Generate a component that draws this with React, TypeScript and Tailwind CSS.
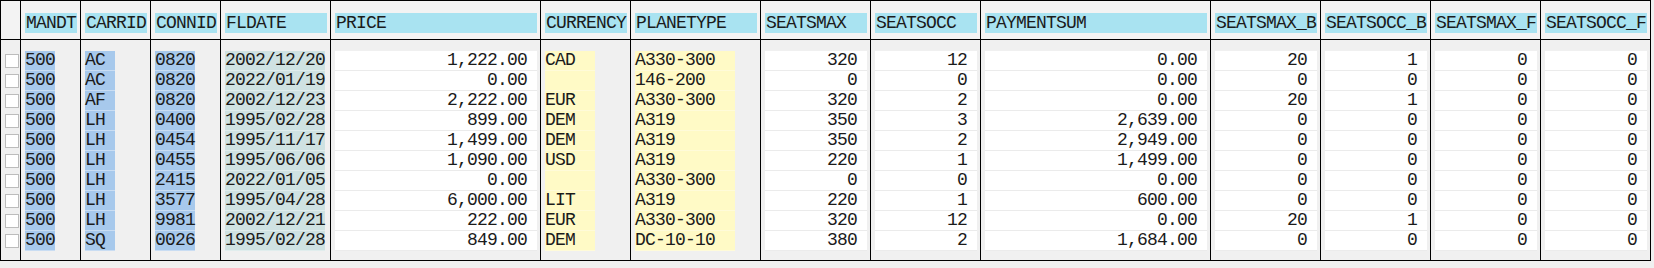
type Kind = "key" | "date" | "cur" | "num";

interface Col {
  name: string;
  width: string;
  kind: Kind;
  box?: string;
}

const columns: Col[] = [
  { name: "MANDT", width: "w-[60px]", kind: "key", box: "w-[30px]" },
  { name: "CARRID", width: "w-[70px]", kind: "key", box: "w-[30px]" },
  { name: "CONNID", width: "w-[70px]", kind: "key", box: "w-[40px]" },
  { name: "FLDATE", width: "w-[110px]", kind: "date", box: "w-[100px]" },
  { name: "PRICE", width: "w-[210px]", kind: "num" },
  { name: "CURRENCY", width: "w-[90px]", kind: "cur", box: "w-[50px]" },
  { name: "PLANETYPE", width: "w-[130px]", kind: "cur", box: "w-[100px]" },
  { name: "SEATSMAX", width: "w-[110px]", kind: "num" },
  { name: "SEATSOCC", width: "w-[110px]", kind: "num" },
  { name: "PAYMENTSUM", width: "w-[230px]", kind: "num" },
  { name: "SEATSMAX_B", width: "w-[110px]", kind: "num" },
  { name: "SEATSOCC_B", width: "w-[110px]", kind: "num" },
  { name: "SEATSMAX_F", width: "w-[110px]", kind: "num" },
  { name: "SEATSOCC_F", width: "w-[110px]", kind: "num" },
];

const rows: string[][] = [
  ["500", "AC", "0820", "2002/12/20", "1,222.00", "CAD", "A330-300", "320", "12", "0.00", "20", "1", "0", "0"],
  ["500", "AC", "0820", "2022/01/19", "0.00", "", "146-200", "0", "0", "0.00", "0", "0", "0", "0"],
  ["500", "AF", "0820", "2002/12/23", "2,222.00", "EUR", "A330-300", "320", "2", "0.00", "20", "1", "0", "0"],
  ["500", "LH", "0400", "1995/02/28", "899.00", "DEM", "A319", "350", "3", "2,639.00", "0", "0", "0", "0"],
  ["500", "LH", "0454", "1995/11/17", "1,499.00", "DEM", "A319", "350", "2", "2,949.00", "0", "0", "0", "0"],
  ["500", "LH", "0455", "1995/06/06", "1,090.00", "USD", "A319", "220", "1", "1,499.00", "0", "0", "0", "0"],
  ["500", "LH", "2415", "2022/01/05", "0.00", "", "A330-300", "0", "0", "0.00", "0", "0", "0", "0"],
  ["500", "LH", "3577", "1995/04/28", "6,000.00", "LIT", "A319", "220", "1", "600.00", "0", "0", "0", "0"],
  ["500", "LH", "9981", "2002/12/21", "222.00", "EUR", "A330-300", "320", "12", "0.00", "20", "1", "0", "0"],
  ["500", "SQ", "0026", "1995/02/28", "849.00", "DEM", "DC-10-10", "380", "2", "1,684.00", "0", "0", "0", "0"],
];

const cellBg: Record<Kind, string> = {
  key: "bg-[#a7c9ec] border-b border-[#c9ddf3]",
  date: "bg-[#cfe2e2] border-b border-[#e0eded]",
  cur: "bg-[#fffac6] border-b border-[#fffbd9]",
  num: "bg-white border-b border-[#ebebeb]",
};

function Cell({ col, value }: { col: Col; value: string }) {
  if (col.kind === "num") {
    return (
      <div className={`h-[20px] leading-[19px] text-right pr-[10px] whitespace-nowrap ${cellBg.num}`}>
        {value}
      </div>
    );
  }

  return (
    <div className={`h-[20px] leading-[19px] whitespace-nowrap ${col.box} ${cellBg[col.kind]}`}>
      {value}
    </div>
  );
}

function Column({ col, index }: { col: Col; index: number }) {
  return (
    <div className={`flex flex-col border-l border-black shrink-0 ${col.width}`}>
      <div className="h-[39px] border-b border-black bg-[#f3f3f3] pl-[4px] pr-[3px] pt-[12px]">
        <div className="h-[20px] bg-[#a9e3f1] leading-[20px] whitespace-nowrap pl-[1px]">
          {col.name}
        </div>
      </div>

      <div className="flex-1 bg-[#f0f0f0] pl-[4px] pr-[3px] pt-[11px]">
        {rows.map((row, r) => (
          <Cell key={r} col={col} value={row[index]} />
        ))}
      </div>
    </div>
  );
}

function App() {
  return (
    <div className="w-[1654px] h-[268px] bg-[#f0f0f0] text-[#1b1b1b] font-['Liberation_Mono',monospace] text-[18px] tracking-[-0.8px]">
      <div className="flex w-[1651px] h-[261px] border border-black">

        <div className="w-[19px] shrink-0 flex flex-col">
          <div className="h-[39px] border-b border-black bg-[#f3f3f3]" />
          <div className="flex-1 bg-[#f0f0f0] pt-[11px]">
            {rows.map((_, r) => (
              <div key={r} className="h-[20px] pt-[3px] pl-[4px]">
                <div className="w-[14px] h-[14px] bg-white border border-[#bcbcbc]" />
              </div>
            ))}
          </div>
        </div>

        {columns.map((col, i) => (
          <Column key={col.name} col={col} index={i} />
        ))}

      </div>
    </div>
  );
}

export default App;
